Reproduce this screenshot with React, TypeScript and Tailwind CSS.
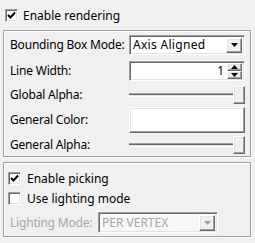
import React from "react";

const CheckBox: React.FC<{ checked?: boolean }> = ({ checked }) => (
  <div className="w-[13px] h-[13px] bg-white border border-t-[#a0a0a0] border-l-[#a0a0a0] border-b-white border-r-white shadow-[inset_1px_1px_0_#696969,inset_-1px_-1px_0_#e3e3e3] flex items-center justify-center shrink-0">
    {checked && (
      <svg width="9" height="9" viewBox="0 0 9 9">
        <path d="M1 4 L3.5 6.5 L8 1.5" stroke="#000" strokeWidth="2" fill="none" />
      </svg>
    )}
  </div>
);

const Raised: React.FC<{ className?: string; children?: React.ReactNode }> = ({ className = "", children }) => (
  <div
    className={
      "border border-t-white border-l-white border-b-[#696969] border-r-[#696969] shadow-[inset_-1px_-1px_0_#a0a0a0,inset_1px_1px_0_#e3e3e3] flex items-center justify-center shrink-0 " +
      className
    }
  >
    {children}
  </div>
);

const Sunken: React.FC<{ className?: string; children?: React.ReactNode }> = ({ className = "", children }) => (
  <div
    className={
      "border border-t-[#a0a0a0] border-l-[#a0a0a0] border-b-white border-r-white shadow-[inset_1px_1px_0_#696969,inset_-1px_-1px_0_#e3e3e3] flex items-center shrink-0 " +
      className
    }
  >
    {children}
  </div>
);

const Arrow: React.FC<{ up?: boolean; color?: string }> = ({ up, color = "#000" }) => (
  <svg width="7" height="4" viewBox="0 0 7 4">
    <path d={up ? "M3.5 0 L7 4 L0 4 Z" : "M0 0 L7 0 L3.5 4 Z"} fill={color} />
  </svg>
);

const Slider: React.FC = () => (
  <div className="flex items-center w-[116px] h-[18px]">
    <div className="flex-1 h-[4px] border-t border-t-[#a0a0a0] border-b border-b-white bg-[#e3e3e3] shadow-[inset_0_1px_0_#696969]" />
    <Raised className="w-[12px] h-[18px] bg-[#f0f0f0]" />
  </div>
);

const Row: React.FC<{ label: string; className?: string; children: React.ReactNode }> = ({ label, className = "", children }) => (
  <div className={"flex items-center justify-between " + className}>
    <span className="whitespace-nowrap tracking-[-0.2px]">{label}</span>
    {children}
  </div>
);

const groupBox =
  "mx-[3px] w-[248px] border border-[#a0a0a0] shadow-[inset_1px_1px_0_#fff,1px_1px_0_#fff]";

export default function App() {
  return (
    <div className="w-[255px] h-[243px] bg-[#f0f0f0] text-[12px] leading-[16px] text-black font-['Noto_Sans',sans-serif] overflow-hidden">
      <div className="flex items-center gap-[5px] pl-[5px] pt-[9px] h-[22px]">
        <CheckBox checked />
        <span>Enable rendering</span>
      </div>

      <div className={groupBox + " mt-[8px] h-[127px] pl-[6px] pr-[5px] pt-[4px]"}>
        <Row label="Bounding Box Mode:" className="h-[20px]">
          <Sunken className="w-[116px] h-[20px] bg-white pl-[3px] pr-[2px] justify-between">
            <span className="tracking-[0.3px]">Axis Aligned</span>
            <Raised className="w-[16px] h-[15px] bg-[#f0f0f0]">
              <Arrow />
            </Raised>
          </Sunken>
        </Row>
        <Row label="Line Width:" className="h-[20px] mt-[6px]">
          <Sunken className="w-[116px] h-[20px] bg-white pr-[2px] justify-end gap-[3px]">
            <span>1</span>
            <div className="flex flex-col">
              <Raised className="w-[15px] h-[8px] bg-[#f0f0f0]">
                <Arrow up />
              </Raised>
              <Raised className="w-[15px] h-[8px] bg-[#f0f0f0]">
                <Arrow />
              </Raised>
            </div>
          </Sunken>
        </Row>
        <Row label="Global Alpha:" className="h-[18px] mt-[5px]">
          <Slider />
        </Row>
        <Row label="General Color:" className="h-[26px] mt-[3px]">
          <Raised className="w-[116px] h-[26px] bg-white" />
        </Row>
        <Row label="General Alpha:" className="h-[18px] mt-[3px]">
          <Slider />
        </Row>
      </div>

      <div className={groupBox + " mt-[5px] h-[75px] pl-[4px] pt-[9px]"}>
        <div className="flex items-center gap-[6px] h-[13px]">
          <CheckBox checked />
          <span>Enable picking</span>
        </div>
        <div className="flex items-center gap-[6px] h-[13px] mt-[7px]">
          <CheckBox />
          <span>Use lighting mode</span>
        </div>
        <div className="flex items-center h-[21px] mt-[7px] pl-[2px] text-[#a0a8b0]">
          <span className="w-[88px] whitespace-nowrap tracking-[-0.2px]">Lighting Mode:</span>
          <Sunken className="w-[120px] h-[21px] bg-[#f7f7f7] pl-[3px] pr-[2px] justify-between">
            <span>PER VERTEX</span>
            <Raised className="w-[16px] h-[16px] bg-[#f0f0f0]">
              <Arrow color="#a0a0a0" />
            </Raised>
          </Sunken>
        </div>
      </div>
    </div>
  );
}
